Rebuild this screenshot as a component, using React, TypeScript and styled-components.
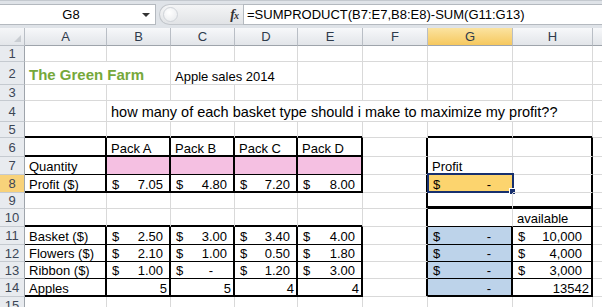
import React from 'react';
import styled, { createGlobalStyle } from 'styled-components';

const GlobalStyle = createGlobalStyle`
  html, body {
    margin: 0;
    padding: 0;
    background: #fff;
    overflow: hidden;
  }
  body {
    font-family: "Liberation Sans", Arial, sans-serif;
  }
`;

const COLS = [82, 64, 64, 63, 65, 65, 85, 80, 20];
const LETTERS = ['A', 'B', 'C', 'D', 'E', 'F', 'G', 'H', 'I'];
const ROWS = [16, 23, 16, 21, 16, 19, 18, 18, 16, 18, 18, 17, 17, 18, 18];

const PINK = '#f5c0e2';
const BLUE = '#bdd3ea';
const YELLOW = '#fcd46e';

type Kind = 'text' | 'title' | 'big' | 'money' | 'dash' | 'num';

interface CellData {
  kind?: Kind;
  text?: string;
  span?: number;
  fill?: string;
  pad?: number;
  selected?: boolean;
}

const data: Record<string, CellData> = {
  A2: { kind: 'title', text: 'The Green Farm', span: 2 },
  C2: { text: 'Apple sales 2014', span: 2 },
  B4: { kind: 'big', text: 'how many of each basket type should i make to maximize my profit??', span: 7 },
  B6: { text: 'Pack A' },
  C6: { text: 'Pack B' },
  D6: { text: 'Pack C' },
  E6: { text: 'Pack D' },
  A7: { text: 'Quantity' },
  B7: { fill: PINK },
  C7: { fill: PINK },
  D7: { fill: PINK },
  E7: { fill: PINK },
  G7: { text: 'Profit' },
  A8: { text: 'Profit ($)' },
  B8: { kind: 'money', text: '7.05' },
  C8: { kind: 'money', text: '4.80' },
  D8: { kind: 'money', text: '7.20' },
  E8: { kind: 'money', text: '8.00' },
  G8: { kind: 'money', text: '-', fill: YELLOW, pad: 18, selected: true },
  H10: { text: 'available' },
  A11: { text: 'Basket ($)' },
  B11: { kind: 'money', text: '2.50' },
  C11: { kind: 'money', text: '3.00' },
  D11: { kind: 'money', text: '3.40' },
  E11: { kind: 'money', text: '4.00' },
  G11: { kind: 'money', text: '-', fill: BLUE, pad: 18 },
  H11: { kind: 'money', text: '10,000', pad: 7 },
  A12: { text: 'Flowers ($)' },
  B12: { kind: 'money', text: '2.10' },
  C12: { kind: 'money', text: '1.00' },
  D12: { kind: 'money', text: '0.50' },
  E12: { kind: 'money', text: '1.80' },
  G12: { kind: 'money', text: '-', fill: BLUE, pad: 18 },
  H12: { kind: 'money', text: '4,000', pad: 7 },
  A13: { text: 'Ribbon ($)' },
  B13: { kind: 'money', text: '1.00' },
  C13: { kind: 'money', text: '-', pad: 18 },
  D13: { kind: 'money', text: '1.20' },
  E13: { kind: 'money', text: '3.00' },
  G13: { kind: 'money', text: '-', fill: BLUE, pad: 18 },
  H13: { kind: 'money', text: '3,000', pad: 7 },
  A14: { text: 'Apples' },
  B14: { kind: 'num', text: '5' },
  C14: { kind: 'num', text: '5' },
  D14: { kind: 'num', text: '4' },
  E14: { kind: 'num', text: '4' },
  G14: { kind: 'dash', text: '-', fill: BLUE, pad: 18 },
  H14: { kind: 'num', text: '13542' },
};

// border weights: 0 = gridline, 1 = thin black, 2 = medium, 3 = double medium
const bottomWeight = (r: number, c: number) => {
  const left = c <= 4;
  const right = c === 6 || c === 7;
  if (r === 5 && (left || right)) return 2;
  if (r === 6 && left) return 2;
  if (r === 7 && left) return 1;
  if (r === 8 && left) return 2;
  if (r === 9 && right) return 3;
  if (r === 10 && left) return 2;
  if (r === 10 && right) return 1;
  if (r >= 11 && r <= 13 && (left || right)) return 1;
  if (r === 14 && (left || right)) return 2;
  return 0;
};

const rightWeight = (r: number, c: number) => {
  const t1 = r >= 6 && r <= 8;
  const t2 = r >= 11 && r <= 14;
  if ((t1 || t2) && c <= 4) return 2;
  if (r >= 6 && r <= 14 && (c === 5 || c === 7)) return 2;
  if (t2 && c === 6) return 2;
  return 0;
};

const edge = (w: number) => (w > 0 ? '#000' : '#d9d9d9');

const shadows = (r: number, b: number) => {
  const list: string[] = [];
  if (r > 1) list.push(`inset -${r - 1}px 0 0 #000`);
  if (b > 1) list.push(`inset 0 -${b - 1}px 0 #000`);
  return list.length ? list.join(', ') : 'none';
};

const Window = styled.div`
  width: 602px;
  height: 307px;
  overflow: hidden;
  background: #fff;
`;

const TopBar = styled.div`
  display: flex;
  height: 28px;
  box-sizing: border-box;
  padding: 3px 0;
  background: #dfe3e8;
  border-top: 1px solid #c4c9cf;
`;

const NameBox = styled.div`
  width: 156px;
  box-sizing: border-box;
  display: flex;
  align-items: center;
  background: #fff;
  border: 1px solid #b4b9bf;
  border-left: none;
  font-size: 13px;
  color: #000;
`;

const NameText = styled.span`
  flex: 1;
  text-align: center;
`;

const DropArrow = styled.span`
  width: 0;
  height: 0;
  margin-right: 5px;
  border-left: 4px solid transparent;
  border-right: 4px solid transparent;
  border-top: 4px solid #333;
`;

const FxButton = styled.div`
  width: 84px;
  margin-left: 3px;
  box-sizing: border-box;
  display: flex;
  align-items: center;
  justify-content: space-between;
  padding: 0 5px 0 3px;
  background: linear-gradient(#f4f5f6, #e1e3e6);
  border: 1px solid #c2c6cb;
  border-right: none;
  border-radius: 11px 0 0 11px;
`;

const GhostCircle = styled.span`
  width: 13px;
  height: 13px;
  border-radius: 50%;
  border: 1px solid #cfd3d8;
  background: radial-gradient(circle at 40% 35%, #fff, #e6e8eb);
`;

const Fx = styled.span`
  font-family: "Liberation Serif", "Times New Roman", serif;
  font-style: italic;
  font-weight: bold;
  font-size: 14px;
  color: #333;
  letter-spacing: -1px;

  small {
    font-size: 10px;
  }
`;

const FormulaInput = styled.div`
  flex: 1;
  box-sizing: border-box;
  display: flex;
  align-items: center;
  padding-left: 3px;
  background: #fff;
  border: 1px solid #b4b9bf;
  border-right: none;
  font-size: 13px;
  color: #000;
  white-space: nowrap;
`;

const Sheet = styled.div`
  display: grid;
  grid-template-columns: 25px ${COLS.map((w) => `${w}px`).join(' ')};
  grid-template-rows: 18px ${ROWS.map((h) => `${h}px`).join(' ')};
  background: #fff;
`;

const Corner = styled.div`
  position: relative;
  box-sizing: border-box;
  background: linear-gradient(#f5f6f8, #e3e6ea);
  border-right: 1px solid #b9bec5;
  border-bottom: 1px solid #b9bec5;

  &::after {
    content: '';
    position: absolute;
    right: 3px;
    bottom: 3px;
    border-left: 7px solid transparent;
    border-bottom: 7px solid #c9cdd2;
  }
`;

const ColHeader = styled.div<{ $active?: boolean }>`
  box-sizing: border-box;
  display: flex;
  align-items: center;
  justify-content: center;
  font-size: 13px;
  color: #2f3b4c;
  background: ${(p) => (p.$active ? 'linear-gradient(#fbe3a0, #f6c85e)' : 'linear-gradient(#f7f8fa, #e2e5e9)')};
  border-right: 1px solid #b9bec5;
  border-bottom: 1px solid #9ea4ab;
`;

const RowHeader = styled.div<{ $active?: boolean }>`
  box-sizing: border-box;
  display: flex;
  align-items: center;
  justify-content: center;
  font-size: 13px;
  color: #3c4656;
  background: ${(p) => (p.$active ? '#f8d27a' : '#e8ebef')};
  border-right: 1px solid #9ea4ab;
  border-bottom: 1px solid #c5cad0;
`;

const Cell = styled.div<{ $r: number; $b: number; $fill?: string; $span?: number }>`
  position: relative;
  box-sizing: border-box;
  min-width: 0;
  grid-column: span ${(p) => p.$span ?? 1};
  display: flex;
  align-items: flex-end;
  padding: 0 3px 0 4px;
  font-size: 13px;
  line-height: 14px;
  color: #000;
  white-space: nowrap;
  background: ${(p) => p.$fill ?? 'transparent'};
  border-right: 1px solid ${(p) => edge(p.$r)};
  border-bottom: 1px solid ${(p) => edge(p.$b)};
  box-shadow: ${(p) => shadows(p.$r, p.$b)};
`;

const Title = styled.span`
  font-size: 15px;
  line-height: 18px;
  font-weight: bold;
  color: #76a83a;
`;

const Big = styled.span`
  font-size: 14.5px;
  line-height: 17px;
`;

const Dollar = styled.span`
  margin-left: 1px;
`;

const Amount = styled.span<{ $pad: number }>`
  margin-left: auto;
  padding-right: ${(p) => p.$pad}px;
`;

const Selection = styled.div`
  position: absolute;
  left: -1px;
  top: -2px;
  right: -2px;
  bottom: -1px;
  border: 2px solid #17306e;
  pointer-events: none;

  &::after {
    content: '';
    position: absolute;
    right: -4px;
    bottom: -4px;
    width: 5px;
    height: 5px;
    background: #17306e;
    border: 1px solid #fff;
  }
`;

const renderContent = (d: CellData) => {
  switch (d.kind) {
    case 'title':
      return <Title>{d.text}</Title>;
    case 'big':
      return <Big>{d.text}</Big>;
    case 'money':
      return (
        <>
          <Dollar>$</Dollar>
          <Amount $pad={d.pad ?? 4}>{d.text}</Amount>
        </>
      );
    case 'dash':
      return <Amount $pad={d.pad ?? 4}>{d.text}</Amount>;
    case 'num':
      return <Amount $pad={0}>{d.text}</Amount>;
    default:
      return d.text ?? null;
  }
};

const App = () => {
  const cells: React.ReactNode[] = [];

  cells.push(<Corner key="corner" />);
  LETTERS.forEach((l) => {
    // the last column is only a sliver at the window edge, its letter is out of view
    cells.push(
      <ColHeader key={`h-${l}`} $active={l === 'G'}>
        {l === 'I' ? '' : l}
      </ColHeader>
    );
  });

  ROWS.forEach((_, i) => {
    const r = i + 1;
    cells.push(
      <RowHeader key={`r-${r}`} $active={r === 8}>
        {r}
      </RowHeader>
    );
    let c = 0;
    while (c < LETTERS.length) {
      const ref = `${LETTERS[c]}${r}`;
      const d = data[ref] ?? {};
      const span = d.span ?? 1;
      const last = c + span - 1;
      cells.push(
        <Cell key={ref} $span={span} $fill={d.fill} $r={rightWeight(r, last)} $b={bottomWeight(r, c)}>
          {renderContent(d)}
          {d.selected && <Selection />}
        </Cell>
      );
      c += span;
    }
  });

  return (
    <Window>
      <GlobalStyle />
      <TopBar>
        <NameBox>
          <NameText>G8</NameText>
          <DropArrow />
        </NameBox>
        <FxButton>
          <GhostCircle />
          <Fx>
            f<small>x</small>
          </Fx>
        </FxButton>
        <FormulaInput>=SUMPRODUCT(B7:E7,B8:E8)-SUM(G11:G13)</FormulaInput>
      </TopBar>
      <Sheet>{cells}</Sheet>
    </Window>
  );
};

export default App;
